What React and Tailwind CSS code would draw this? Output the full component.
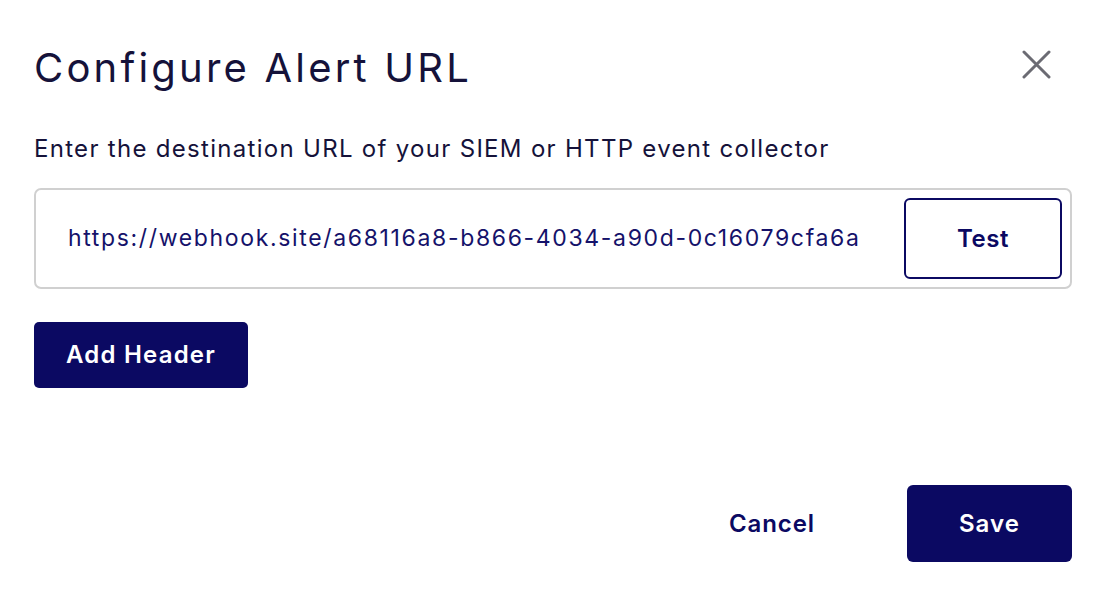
export default function App() {
  return (
    <div className="w-[1110px] h-[595px] bg-white text-[#15123a] flex flex-col pl-[34px] pr-[38px] pt-[40px]" style={{ fontFamily: 'Inter, sans-serif' }}>
      <div className="flex items-start justify-between">
        <h1 className="text-[40px] leading-[56px] font-normal tracking-[3.2px]">Configure Alert URL</h1>
        <button className="mt-[10px] mr-[21px] text-[#6b6b73]">
          <svg width="29" height="29" viewBox="0 0 29 29" fill="none" stroke="currentColor" strokeWidth="3" strokeLinecap="round">
            <path d="M2 2 L27 27 M27 2 L2 27" />
          </svg>
        </button>
      </div>
      <p className="mt-[38px] text-[24px] leading-[30px] tracking-[1.3px]">Enter the destination URL of your SIEM or HTTP event collector</p>
      <div className="mt-[24px] h-[101px] border-2 border-[#d0d0d0] rounded-[7px] flex items-center pl-[32px] pr-[8px] justify-between">
        <span className="text-[23px] text-[#15126a] tracking-[1.65px]">https://webhook.site/a68116a8-b866-4034-a90d-0c16079cfa6a</span>
        <button className="w-[158px] h-[81px] border-2 border-[#0b0962] rounded-[6px] text-[24px] font-semibold text-[#0b0962] tracking-[0.6px]">Test</button>
      </div>
      <div className="mt-[33px]">
        <button className="w-[214px] h-[66px] bg-[#0b0962] rounded-[5px] text-white text-[24px] font-semibold tracking-[1.2px]">Add Header</button>
      </div>
      <div className="mt-[97px] flex items-center justify-end">
        <button className="mr-[92px] text-[24px] font-semibold text-[#0b0962] tracking-[0.9px]">Cancel</button>
        <button className="w-[165px] h-[77px] bg-[#0b0962] rounded-[6px] text-white text-[24px] font-semibold tracking-[1.1px]">Save</button>
      </div>
    </div>
  );
}
